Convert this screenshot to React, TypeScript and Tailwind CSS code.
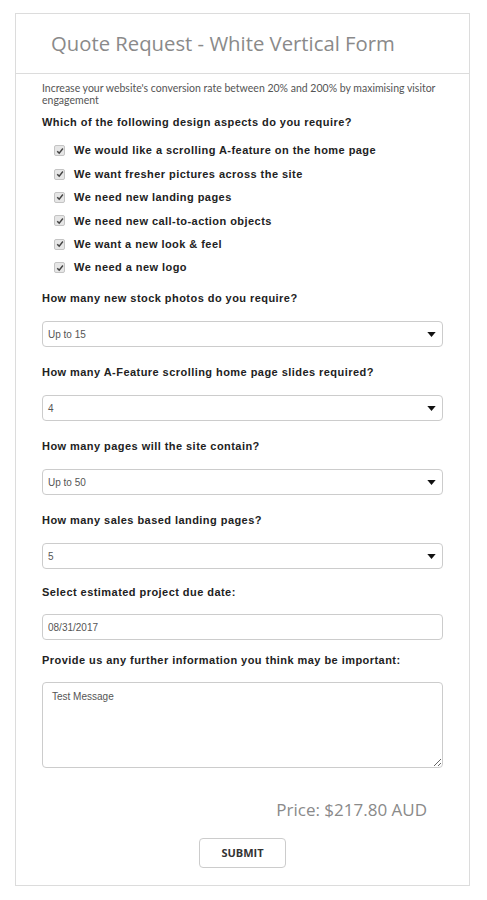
import React from 'react'

const aspects = [
    'We would like a scrolling A-feature on the home page',
    'We want fresher pictures across the site',
    'We need new landing pages',
    'We need new call-to-action objects',
    'We want a new look & feel',
    'We need a new logo',
]

const selects = [
    { label: 'How many new stock photos do you require?', value: 'Up to 15' },
    { label: 'How many A-Feature scrolling home page slides required?', value: '4' },
    { label: 'How many pages will the site contain?', value: 'Up to 50' },
    { label: 'How many sales based landing pages?', value: '5' },
]

function Check() {
    return (
        <span className="w-[11px] h-[11px] rounded-[2px] border border-[#c4c4c4] bg-[#e6e6e6] flex items-center justify-center shrink-0">
            <svg viewBox="0 0 10 10" className="w-[8px] h-[8px]">
                <path d="M1.5 5.2 L4 7.6 L8.6 1.8" fill="none" stroke="#444" strokeWidth="1.8" />
            </svg>
        </span>
    )
}

function Label({ children }: { children: React.ReactNode }) {
    return <div className="text-[11px] leading-[14px] font-bold tracking-[0.45px] text-[#222] font-['Liberation_Sans',Arial,sans-serif]">{children}</div>
}

export default function App() {
    return (
        <div className="bg-white min-h-[900px] pt-[13px] pl-[15px] pr-[18px]">
            <div className="border border-[#dcdcdc] w-[455px] pb-[17px]">
                <div className="h-[60px] border-b border-[#dcdcdc] flex items-center pl-[35px]">
                    <h1 className="text-[20.3px] text-[#8a8a8a] font-['Open_Sans',sans-serif]">Quote Request - White Vertical Form</h1>
                </div>

                <div className="px-[26px] pt-[8px]">
                    <p className="text-[10.5px] leading-[12px] text-[#555] font-['Lato',sans-serif]">
                        Increase your website's conversion rate between 20% and 200% by maximising visitor engagement
                    </p>

                    <div className="mt-[9px]">
                        <Label>Which of the following design aspects do you require?</Label>
                    </div>

                    <div className="mt-[10px] pl-[12px] flex flex-col">
                        {aspects.map(a => (
                            <div key={a} className="h-[23.4px] flex items-center gap-[9px]">
                                <Check />
                                <span className="text-[11px] font-bold tracking-[0.45px] text-[#222] font-['Liberation_Sans',Arial,sans-serif]">{a}</span>
                            </div>
                        ))}
                    </div>

                    {selects.map((s, i) => (
                        <div key={s.label} className={i === 0 ? 'mt-[12px]' : 'mt-[18px]'}>
                            <Label>{s.label}</Label>
                            <div className="mt-[16px] h-[26px] border border-[#ccc] rounded-[4px] flex items-center justify-between pl-[5px] pr-[6px]">
                                <span className="text-[10px] text-[#555] font-['Liberation_Sans',Arial,sans-serif]">{s.value}</span>
                                <svg viewBox="0 0 10 6" className="w-[9px] h-[5px]">
                                    <path d="M0 0 L10 0 L5 6 Z" fill="#111" />
                                </svg>
                            </div>
                        </div>
                    ))}

                    <div className="mt-[16px]">
                        <Label>Select estimated project due date:</Label>
                        <input
                            readOnly
                            value="08/31/2017"
                            className="mt-[15px] w-full h-[26px] border border-[#ccc] rounded-[4px] px-[5px] text-[10px] text-[#555] font-['Liberation_Sans',Arial,sans-serif] outline-none block"
                        />
                    </div>

                    <div className="mt-[13px]">
                        <Label>Provide us any further information you think may be important:</Label>
                        <textarea
                            readOnly
                            value="Test Message"
                            className="mt-[15px] w-full h-[86px] border border-[#ccc] rounded-[4px] px-[9px] py-[6px] text-[10px] text-[#555] font-['Liberation_Sans',Arial,sans-serif] outline-none block"
                        />
                    </div>

                    <div className="mt-[29px] flex justify-end pr-[16px]">
                        <span className="text-[17px] text-[#8a8a8a] font-['Open_Sans',sans-serif]">Price: $217.80 AUD</span>
                    </div>

                    <div className="mt-[15px] flex justify-center">
                        <button className="w-[87px] h-[30px] border border-[#ccc] rounded-[4px] bg-white text-[11px] font-bold text-[#333] font-['Open_Sans',sans-serif]">
                            SUBMIT
                        </button>
                    </div>
                </div>
            </div>
        </div>
    )
}
